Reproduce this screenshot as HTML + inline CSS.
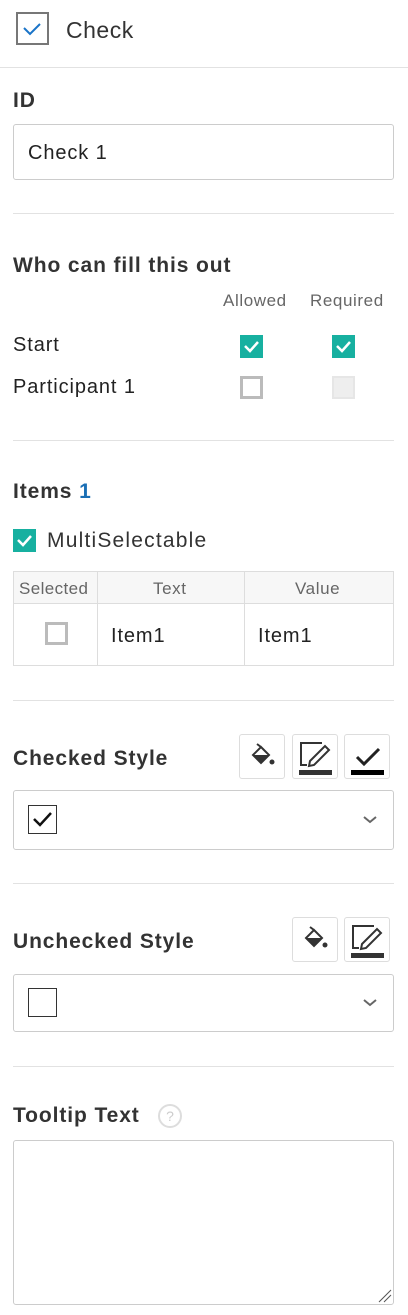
<!DOCTYPE html>
<html><head><meta charset="utf-8"><style>
*{box-sizing:border-box;margin:0;padding:0}
body{width:408px;height:1315px;background:#fff;font-family:"Liberation Sans",sans-serif;color:#222;position:relative;overflow:hidden}
.a{position:absolute}
.t{position:absolute;white-space:nowrap;line-height:1;letter-spacing:0.9px}
.hr{position:absolute;left:13px;width:381px;height:1px;background:#e2e2e2}
.lbl{font-size:21px;color:#333;font-weight:bold;letter-spacing:0.9px}
.box{position:absolute;border:1px solid #ccc;border-radius:3px;background:#fff}
.cb{position:absolute;width:23px;height:23px}
.on{background:#17b0a0}
.off{border:3px solid #bbb;background:#fff}
.dis{background:#eee;border:2px solid #e6e6e6}
.btn{position:absolute;width:46px;height:45px;border:1px solid #ddd;border-radius:3px;background:#fff}
</style></head><body>
<div class="a" style="left:16px;top:12px;width:33px;height:33px;border:2px solid #777"></div>
<svg class="a" style="left:22px;top:22px" width="20" height="14"><path d="M2 6 L8 12 L18 2" fill="none" stroke="#1a74c8" stroke-width="2"/></svg>
<div class="t" style="left:66px;top:19px;font-size:23px;color:#333;letter-spacing:0.5px">Check</div>
<div class="a" style="left:0;top:67px;width:408px;height:1px;background:#e2e2e2"></div>

<div class="t lbl" style="left:13px;top:90px">ID</div>
<div class="box" style="left:13px;top:124px;width:381px;height:56px"></div>
<div class="t" style="left:28px;top:143px;font-size:20px;color:#222">Check 1</div>
<div class="hr" style="top:213px"></div>

<div class="t lbl" style="left:13px;top:255px">Who can fill this out</div>
<div class="t" style="left:223px;top:292px;font-size:17px;color:#666;letter-spacing:0.6px">Allowed</div>
<div class="t" style="left:310px;top:292px;font-size:17px;color:#666;letter-spacing:0.6px">Required</div>
<div class="t" style="left:13px;top:335px;font-size:20px">Start</div>
<div class="t" style="left:13px;top:377px;font-size:20px">Participant 1</div>
<div class="cb on" style="left:240px;top:335px"><svg width="23" height="23"><path d="M5 11 L10 16 L18 7" fill="none" stroke="#fff" stroke-width="2.5"/></svg></div>
<div class="cb on" style="left:332px;top:335px"><svg width="23" height="23"><path d="M5 11 L10 16 L18 7" fill="none" stroke="#fff" stroke-width="2.5"/></svg></div>
<div class="cb off" style="left:240px;top:376px"></div>
<div class="cb dis" style="left:332px;top:376px"></div>
<div class="hr" style="top:440px"></div>

<div class="t lbl" style="left:13px;top:481px">Items <span style="color:#1a6fb5">1</span></div>
<div class="cb on" style="left:13px;top:529px"><svg width="23" height="23"><path d="M5 11 L10 16 L18 7" fill="none" stroke="#fff" stroke-width="2.5"/></svg></div>
<div class="t" style="left:47px;top:530px;font-size:21px;color:#333;letter-spacing:1.2px">MultiSelectable</div>
<div class="a" style="left:13px;top:571px;width:381px;height:95px;border:1px solid #ddd"></div>
<div class="a" style="left:14px;top:572px;width:379px;height:32px;background:#f7f7f7;border-bottom:1px solid #ddd"></div>
<div class="a" style="left:97px;top:572px;width:1px;height:93px;background:#ddd"></div>
<div class="a" style="left:244px;top:572px;width:1px;height:93px;background:#ddd"></div>
<div class="t" style="left:19px;top:580px;font-size:17px;color:#666;letter-spacing:0.4px">Selected</div>
<div class="t" style="left:153px;top:580px;font-size:17px;color:#666;letter-spacing:0.6px">Text</div>
<div class="t" style="left:295px;top:580px;font-size:17px;color:#666;letter-spacing:0.6px">Value</div>
<div class="cb off" style="left:45px;top:622px"></div>
<div class="t" style="left:111px;top:626px;font-size:20px">Item1</div>
<div class="t" style="left:258px;top:626px;font-size:20px">Item1</div>
<div class="hr" style="top:700px"></div>

<div class="t lbl" style="left:13px;top:748px">Checked Style</div>
<div class="btn" style="left:239px;top:734px"><svg width="46" height="45"><path d="M17 9 L21 12" stroke="#333" stroke-width="2"/><path d="M21 12 L29 20 L21 28 L13 20 Z" fill="none" stroke="#333" stroke-width="2"/><path d="M13 20 L29 20 L21 28 Z" fill="#333"/><circle cx="32" cy="27" r="2.5" fill="#333"/></svg></div>
<div class="btn" style="left:292px;top:734px"><svg width="46" height="45"><path d="M14 30 H8 V8 H29" fill="none" stroke="#333" stroke-width="2"/><path d="M17 26 L32 11 L36 15 L21 30 L16 31 Z" fill="none" stroke="#333" stroke-width="2"/><rect x="6" y="35" width="33" height="5" fill="#333"/></svg></div>
<div class="btn" style="left:344px;top:734px"><svg width="46" height="45"><path d="M12 22 L19 29 L34 14" fill="none" stroke="#222" stroke-width="3"/><rect x="6" y="35" width="33" height="5" fill="#000"/></svg></div>
<div class="box" style="left:13px;top:790px;width:381px;height:60px"></div>
<div class="a" style="left:28px;top:805px;width:29px;height:29px;border:1px solid #333"></div>
<svg class="a" style="left:31px;top:809px" width="23" height="20"><path d="M3 10 L9 16 L20 4" fill="none" stroke="#111" stroke-width="2.5"/></svg>
<svg class="a" style="left:362px;top:815px" width="16" height="10"><path d="M2 2 L8 7 L14 2" fill="none" stroke="#666" stroke-width="2"/></svg>
<div class="hr" style="top:883px"></div>

<div class="t lbl" style="left:13px;top:931px">Unchecked Style</div>
<div class="btn" style="left:292px;top:917px"><svg width="46" height="45"><path d="M17 9 L21 12" stroke="#333" stroke-width="2"/><path d="M21 12 L29 20 L21 28 L13 20 Z" fill="none" stroke="#333" stroke-width="2"/><path d="M13 20 L29 20 L21 28 Z" fill="#333"/><circle cx="32" cy="27" r="2.5" fill="#333"/></svg></div>
<div class="btn" style="left:344px;top:917px"><svg width="46" height="45"><path d="M14 30 H8 V8 H29" fill="none" stroke="#333" stroke-width="2"/><path d="M17 26 L32 11 L36 15 L21 30 L16 31 Z" fill="none" stroke="#333" stroke-width="2"/><rect x="6" y="35" width="33" height="5" fill="#333"/></svg></div>
<div class="box" style="left:13px;top:974px;width:381px;height:58px"></div>
<div class="a" style="left:28px;top:988px;width:29px;height:29px;border:1px solid #333"></div>
<svg class="a" style="left:362px;top:998px" width="16" height="10"><path d="M2 2 L8 7 L14 2" fill="none" stroke="#666" stroke-width="2"/></svg>
<div class="hr" style="top:1066px"></div>

<div class="t lbl" style="left:13px;top:1105px">Tooltip Text</div>
<div class="a" style="left:158px;top:1104px;width:24px;height:24px;border:2px solid #ddd;border-radius:50%;color:#ccc;font-size:14px;text-align:center;line-height:20px">?</div>
<div class="box" style="left:13px;top:1140px;width:381px;height:165px"></div>
<svg class="a" style="left:378px;top:1289px" width="14" height="14"><path d="M1 13 L13 1 M6 13 L13 6" stroke="#555" stroke-width="1"/></svg>
</body></html>
